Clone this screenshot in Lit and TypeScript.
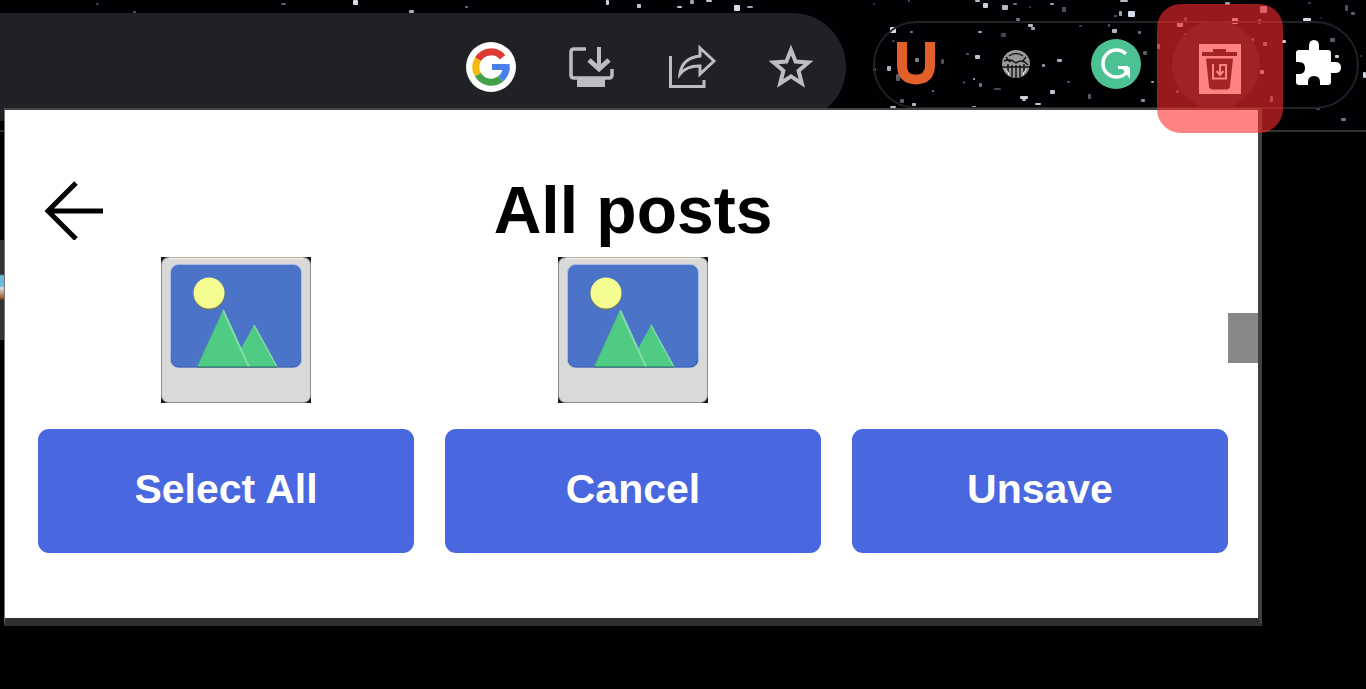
import { LitElement, html, css, svg } from "lit";
import { customElement } from "lit/decorators.js";

/* x, y, width, height, opacity */
const STARS: number[][] = [
  [96, 3, 3, 2, 0.3], [133, 11, 3, 2, 0.4], [281, 3, 5, 2, 0.4], [353, 0, 5, 5, 0.95], [409, 10, 5, 3, 0.75],
  [465, 6, 3, 2, 0.5], [606, 0, 3, 5, 0.9], [637, 4, 4, 4, 0.85], [677, 6, 5, 2, 0.85], [690, 0, 4, 4, 0.7],
  [706, 0, 6, 2, 0.85], [734, 5, 6, 6, 0.95], [747, 6, 6, 2, 0.7], [873, 3, 2, 2, 0.3], [908, 0, 2, 2, 0.4],
  [975, 0, 5, 2, 0.8], [983, 3, 5, 5, 0.9], [1002, 5, 6, 5, 0.8], [1013, 3, 4, 2, 0.5], [1050, 3, 4, 2, 0.7],
  [1062, 7, 4, 5, 0.35], [1029, 6, 2, 2, 0.3], [1120, 0, 8, 2, 0.8], [1119, 11, 3, 5, 0.7], [1128, 11, 7, 6, 0.95],
  [1114, 15, 3, 2, 0.4], [1016, 18, 4, 3, 0.5], [1028, 24, 5, 3, 0.8], [1031, 27, 4, 3, 0.7], [890, 27, 6, 6, 0.95],
  [910, 31, 3, 2, 0.55], [892, 40, 3, 2, 0.3], [978, 31, 4, 2, 0.7], [1001, 33, 5, 4, 0.3], [1079, 25, 3, 2, 0.3],
  [1108, 24, 2, 3, 0.4], [1112, 29, 5, 4, 0.8], [1138, 31, 3, 3, 0.5], [966, 53, 3, 2, 0.4], [975, 55, 5, 4, 0.85],
  [941, 59, 3, 5, 0.35], [915, 58, 4, 4, 0.55], [887, 66, 4, 5, 0.75], [873, 68, 3, 3, 0.5], [896, 74, 4, 7, 0.4],
  [923, 71, 3, 3, 0.8], [932, 90, 2, 2, 0.6], [963, 81, 2, 3, 0.3], [973, 78, 2, 2, 0.8], [979, 83, 3, 4, 0.5],
  [994, 88, 7, 2, 0.3], [1042, 64, 3, 3, 0.65], [1057, 59, 5, 3, 0.75], [1067, 81, 3, 2, 0.4], [1050, 90, 5, 4, 0.85],
  [1020, 96, 8, 3, 0.9], [1022, 99, 4, 2, 0.8], [1035, 103, 6, 2, 0.85], [1088, 94, 3, 5, 0.4], [1141, 99, 4, 3, 0.6],
  [1151, 81, 3, 2, 0.7], [1143, 51, 4, 4, 0.4], [900, 99, 4, 4, 0.4], [912, 103, 4, 3, 0.8], [890, 106, 6, 2, 0.8],
  [972, 106, 4, 2, 0.75], [1225, 2, 5, 3, 0.7], [1260, 6, 7, 7, 0.75], [1232, 18, 6, 6, 0.9], [1258, 19, 3, 5, 0.5],
  [1177, 22, 6, 5, 0.8], [1184, 17, 3, 4, 0.4], [1194, 27, 5, 3, 0.8], [1184, 33, 5, 4, 0.5], [1157, 44, 3, 5, 0.6],
  [1175, 55, 4, 3, 0.4], [1189, 56, 3, 2, 0.4], [1178, 70, 4, 4, 0.7], [1182, 78, 3, 3, 0.8], [1195, 78, 4, 5, 0.9],
  [1176, 90, 3, 3, 0.4], [1260, 70, 4, 4, 0.8], [1263, 42, 4, 4, 0.6], [1251, 38, 3, 3, 0.5], [1270, 96, 3, 6, 0.5],
  [1210, 97, 3, 2, 0.6], [1221, 99, 3, 4, 0.5], [1303, 18, 8, 3, 0.95], [1345, 5, 3, 6, 0.35], [1351, 12, 4, 3, 0.4],
  [1282, 40, 4, 3, 0.85], [1330, 38, 5, 4, 0.4], [1335, 55, 4, 3, 0.9], [1363, 72, 3, 6, 0.9], [1316, 107, 4, 3, 0.35],
  [1341, 118, 5, 3, 0.5], [1308, 2, 3, 2, 0.3], [1320, 17, 2, 2, 0.2], [1360, 55, 2, 2, 0.25],
];

const googleIcon = svg`
  <circle cx="25" cy="25" r="25" fill="#fff"/>
  <g fill="none" stroke-width="7">
    <path d="M36.6 15.2A15.2 15.2 0 0 0 12 17.2" stroke="#dd3a32"/>
    <path d="M12 17.2a15.2 15.2 0 0 0 0 15.6" stroke="#f7b90f"/>
    <path d="M12 32.8A15.2 15.2 0 0 0 34.8 36.8" stroke="#45a04b"/>
    <path d="M34.8 36.8A15.2 15.2 0 0 0 40.2 25.2" stroke="#4a80ee"/>
  </g>
  <path d="M26 22h17.6v6H26z" fill="#4a80ee"/>`;

const installIcon = svg`
  <g fill="none" stroke="#bcbdc1" stroke-width="4">
    <path d="M20 7H8q-3 0-3 3v23q0 3 3 3h35q3 0 3-3v-6" stroke-width="3.500"/>
    <path d="M33 5v19" />
    <path d="M23 18l10 9 10-9" stroke-width="5"/>
  </g>
  <path d="M11 37h28v8H11z" fill="#bcbdc1"/>`;

const shareIcon = svg`
  <g fill="none" stroke="#bcbdc1" stroke-width="3">
    <path d="M4.500 14v30.500H38V38"/>
    <path d="M34 6l14 13-14 13v-8q-13-.5-20 8 2-16 20-18z" stroke-linejoin="miter"/>
  </g>`;

const starIcon = svg`
  <path d="M25 8l4.600 11.600 12.800.9-9.800 8.200 3.200 12.700L25 34.400l-10.800 7 3.200-12.700-9.800-8.200 12.800-.9z"
    fill="none" stroke="#bcbdc1" stroke-width="4"/>`;

const magnetIcon = svg`
  <path d="M26 17v23q0 14.500 14 14.500t14-14.500V17" fill="none" stroke="#e4602b" stroke-width="10"/>`;

const ballIcon = svg`
  <circle cx="40" cy="39" r="14" fill="#999"/>
  <g fill="none" stroke="#171717" stroke-width="1.500">
    <path d="M33 31q7-5 14 0M28 36q6-3 12 2 6-5 12 2M26 42h28M30 32l4 5M50 32l-4 5"/>
    <path d="M32 39v10M36 40v12M40 40v13M44 40v12M48 39v10"/>
  </g>
  <path d="M29 43l4 5v3zM51 43l-4 5v3z" fill="#fff"/>`;

const grammarIcon = svg`
  <circle cx="40" cy="39" r="25" fill="#4cc293"/>
  <path d="M50 29A13.500 13.500 0 1 0 51 47" fill="none" stroke="#fff" stroke-width="3.500"/>
  <path d="M42 42.500h10" fill="none" stroke="#fff" stroke-width="3"/>
  <path d="M45 42h9v12z" fill="#fff"/>`;

const trashIcon = svg`
  <path d="M23 19h42v50H23z" fill="#fff"/>
  <g fill="#241c1e">
    <path d="M37 24h13v3h11v4H26v-4h11z"/>
    <path d="M30 33.500h27l-3 28q-.5 3-4 3H37q-3.500 0-4-3z"/>
  </g>
  <g fill="none" stroke="#fff" stroke-width="2">
    <path d="M37 39v14.500h13V40h-6v9"/><path d="M40.500 46l3.500 4 3.500-4"/>
  </g>`;

const puzzleIcon = svg`
  <path fill="#fff" d="M20 28q0-3 3-3h10v-4q0-6 5-6t5 6v4h9q3 0 3 3v9h4q6 0 6 5.500t-6 5.500h-4v9q0 3-3 3h-8v-3q0-6-6-6t-6 6v3H23q-3 0-3-3v-8h3q6 0 6-6t-6-6h-3z"/>`;

@customElement("photo-card")
export class PhotoCard extends LitElement {
  static styles = css`
    :host { display: block; }
    .photo { display: block; width: 150px; height: 146px; margin: 0 auto; }
  `;
  render() {
    return html`<svg class="photo" viewBox="0 0 150 146" role="img" aria-label="Saved post">
      <path d="M0 0h150v146H0z" fill="#151515"/>
      <rect x="0.500" y="0.500" width="149" height="145" rx="7" fill="#d9d9d9" stroke="#8d8d8d"/>
      <path d="M8 1.500h134" stroke="#eee5dd" stroke-width="2"/>
      <rect x="9.500" y="7.500" width="131" height="103" rx="8" fill="#4b74c9" stroke="#a9bde4"/>
      <path d="M10.500 102q0 8 8 8h113q8 0 8-8" fill="none" stroke="#3c5cab"/>
      <circle cx="48" cy="37" r="16" fill="#6f795f"/>
      <circle cx="48" cy="36" r="15.500" fill="#f6fd90"/>
      <path d="M70 110l23-42 23 42z" fill="#50cb84"/>
      <path d="M93 68l23 42" fill="none" stroke="#85dbaa" stroke-width="1.500"/>
      <path d="M36 110l26-57 26 57z" fill="#50cb84"/>
      <path d="M62 53l26 57" stroke="#85dbaa" stroke-width="2"/>
      <path d="M36 110l26-57" stroke="#4d9e94"/>
      <path d="M36 110h80" stroke="#2d6d62"/>
    </svg>`;
  }
}

@customElement("browser-toolbar")
export class BrowserToolbar extends LitElement {
  static styles = css`
    :host { display: block; }
    .toolbar {
      display: flex; align-items: flex-start; gap: 27px; box-sizing: border-box;
      height: 132px; padding: 13px 7px 0 0; border-bottom: 2px solid #323235;
    }
    button { padding: 0; border: 0; background: none; flex: none; }
    svg { display: block; overflow: visible; }
    .address {
      flex: 1; display: flex; align-items: center; justify-content: flex-end; gap: 50px;
      box-sizing: border-box; height: 108px; padding-right: 30px;
      background: #202124; border-radius: 0 54px 54px 0;
    }
    .action, .action svg { width: 50px; height: 50px; }
    .extensions {
      display: flex; align-items: center; gap: 20px; box-sizing: border-box;
      height: 88px; margin-top: 8px; padding: 0 1px;
      border: 2px solid #222225; border-radius: 44px;
    }
    .extension { position: relative; width: 80px; height: 80px; }
    .extension svg { width: 80px; height: 80px; }
    .current { border-radius: 50%; background: #18171a; box-shadow: 0 0 0 4px #18171a; }
    .highlight {
      position: absolute; z-index: 2; inset: -21px -27px -28px -19px;
      border-radius: 24px; background: rgba(255, 44, 44, 0.588); pointer-events: none;
    }
  `;
  render() {
    const action = (label: string, icon: unknown) => html`
      <button class="action" aria-label=${label}><svg viewBox="0 0 50 50">${icon}</svg></button>`;
    const extension = (label: string, icon: unknown) => html`
      <button class="extension" aria-label=${label}><svg viewBox="0 0 80 80">${icon}</svg></button>`;
    return html`<header class="toolbar">
      <div class="address">
        ${action("Google", googleIcon)} ${action("Install", installIcon)}
        ${action("Share", shareIcon)} ${action("Bookmark", starIcon)}
      </div>
      <nav class="extensions" aria-label="Extensions">
        ${extension("U", magnetIcon)} ${extension("Ball", ballIcon)} ${extension("Grammar", grammarIcon)}
        <button class="extension current" aria-label="Unsave posts">
          <svg viewBox="0 0 80 80">${trashIcon}</svg><span class="highlight"></span>
        </button>
        ${extension("Manage extensions", puzzleIcon)}
      </nav>
    </header>`;
  }
}

@customElement("posts-popup")
export class PostsPopup extends LitElement {
  static styles = css`
    :host { display: block; }
    .popup {
      position: relative; background: #fff; color: #000;
      border: solid; border-width: 2px 4px 8px 1px;
      border-color: #444448 #404040 #2e3030 #777;
      padding: 53px 30px 65px 33px;
    }
    .heading { display: grid; grid-template-columns: 1fr auto 1fr; align-items: center; height: 94px; }
    .back { justify-self: start; padding: 0; margin-left: 6px; border: 0; background: none; }
    .back svg { display: block; width: 62px; height: 60px; }
    h1 { margin: 0; font-size: 66px; line-height: 74px; font-weight: 700; }
    .photos { display: grid; grid-template-columns: repeat(3, 1fr); }
    .actions { display: grid; grid-template-columns: repeat(3, 1fr); gap: 31px; margin-top: 26px; }
    .actions button {
      height: 124px; padding: 0 0 4px; border: 0; border-radius: 11px;
      background: #4967de; color: #fff; font: 700 41px/48px "Liberation Sans", Arial, sans-serif;
    }
    .thumb { position: absolute; right: 0; top: 203px; width: 30px; height: 50px; background: #888; }
  `;
  render() {
    return html`<main class="popup">
      <div class="heading">
        <button class="back" aria-label="Back">
          <svg viewBox="0 0 62 60"><path d="M59 31H4M32 3L4 31l28 28" fill="none" stroke="#000" stroke-width="5"/></svg>
        </button>
        <h1>All posts</h1>
      </div>
      <div class="photos"><photo-card></photo-card><photo-card></photo-card></div>
      <div class="actions">
        <button>Select All</button><button>Cancel</button><button>Unsave</button>
      </div>
      <div class="thumb"></div>
    </main>`;
  }
}

@customElement("app-root")
export class AppRoot extends LitElement {
  static styles = css`
    :host {
      display: block; position: relative; min-height: 100vh; overflow: hidden;
      background: #000; font-family: "Liberation Sans", Arial, sans-serif;
    }
    .sky { position: absolute; top: 0; right: 0; width: 1366px; height: 131px; background: #010104; }
    .edge {
      position: absolute; left: 0; top: 240px; width: 4px; height: 100px;
      background: linear-gradient(#333 0 34%, #69bdda 36% 46%, #ddd 48%, #a65b25 58%, #333 60%);
    }
    browser-toolbar { position: relative; }
    posts-popup { margin: -24px 104px 0 4px; }
  `;
  render() {
    return html`
      <svg class="sky" viewBox="0 0 1366 131" aria-hidden="true">
        ${STARS.map(([x, y, w, h, o]) => svg`<rect x=${x} y=${y} width=${w} height=${h} rx="1" fill="#dfe8f5" opacity=${o}/>`)}
      </svg>
      <div class="edge"></div>
      <browser-toolbar></browser-toolbar>
      <posts-popup></posts-popup>`;
  }
}
